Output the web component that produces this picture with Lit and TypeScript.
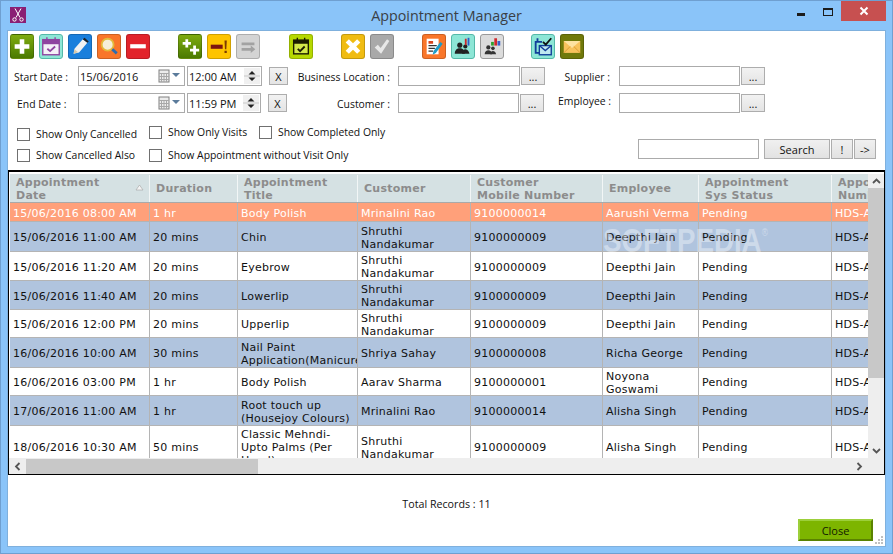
import { LitElement, css, html, svg } from 'lit'
import { customElement } from 'lit/decorators.js'

const wh = '#fff'

const icons: Record<string, unknown> = {
    add: svg`<path d="M9.500 4h5v5.500H20v5h-5.500V20h-5v-5.500H4v-5h5.500z" fill="${wh}"/>`,
    cal: svg`<rect x="3" y="4.500" width="18" height="16.500" fill="#f4f0f8" stroke="#8e44a0" stroke-width="1.500"/><rect x="3" y="4.500" width="18" height="5" fill="#8e44a0"/><path d="M7.500 2v4.500M16.500 2v4.500" stroke="#8e44a0" stroke-width="1.500"/><path d="M8 14.500l3 2.500 5.500-5" fill="none" stroke="#8e44a0" stroke-width="2"/>`,
    pencil: svg`<path d="M15 4l5 4-9 10.500-6 1.500 1-5.500z" fill="#f2f2f2"/><path d="M15 4l2-1.500 4.500 4L20 8z" fill="#222"/><path d="M5 20l1-5 4 3.200z" fill="#d8c8a8"/>`,
    glass: svg`<circle cx="10.500" cy="10" r="6.500" fill="#f6efd8" stroke="#e4b93a" stroke-width="2"/><path d="M15.500 15l5 4.500" stroke="#2c6db0" stroke-width="3"/>`,
    minus: svg`<rect x="3.500" y="9.500" width="17" height="4.500" fill="${wh}"/>`,
    addMore: svg`<path d="M7 4h3v3h3v3h-3v3H7v-3H4V7h3zM15.500 11h3v3.500H22v3h-3.500V21h-3v-3.500H12v-3h3.500z" fill="${wh}"/>`,
    warn: svg`<rect x="3" y="10" width="13" height="4.500" fill="#7c1510"/><path d="M18 5.500h2.500L20 15h-1.500zM18 16.500h2.500V19H18z" fill="#7c3b00"/>`,
    swap: svg`<path d="M5 7.500h14v3H5zM5 13.500h10V11l5 4-5 4v-2.500H5z" fill="#a2a2a2"/>`,
    calBlack: svg`<rect x="4" y="5" width="16" height="15" fill="#d4e84a" stroke="#1c1c00" stroke-width="1.500"/><rect x="4" y="5" width="16" height="4" fill="#1c1c00"/><path d="M8 2.500v4M16 2.500v4" stroke="#1c1c00" stroke-width="1.500"/><path d="M8.500 14.500l2.500 2.500 5-5" fill="none" stroke="#1c1c00" stroke-width="2"/>`,
    cross: svg`<path d="M4 7.500L7.500 4l4.500 4.500L16.500 4 20 7.500 15.500 12l4.500 4.500-3.500 3.500-4.500-4.500L7.500 20 4 16.500 8.500 12z" fill="${wh}"/>`,
    tick: svg`<path d="M4 13l3.500-3 3 3.500L17.500 4 20 6 11 20z" fill="#e8e8e8"/>`,
    form: svg`<rect x="4" y="3.500" width="13" height="17" fill="#fff"/><path d="M6 6h5v3H6z" fill="#d8431c"/><path d="M6 11h9M6 14h7M6 17h5" stroke="#333" stroke-width="1.500"/><path d="M19 7l2.500 2L14 19l-3.500 2 1-4z" fill="#1c9cc8"/>`,
    people: svg`<circle cx="8.500" cy="10.500" r="2.800" fill="#222"/><path d="M3 20c0-4 2.500-6 5.500-6s5.500 2 5.500 6z" fill="#222"/><circle cx="14.500" cy="12" r="2.300" fill="#222"/><path d="M11 20c.5-3.500 2-5 3.500-5s4 1.500 4.500 5z" fill="#222"/><path d="M14 3.500h2v7h-2z" fill="#c8282c"/><path d="M17 2.500h2V11h-2z" fill="#2c5cc8"/>`,
    peopleSmall: svg`<circle cx="8" cy="13" r="2.300" fill="#333"/><path d="M4 20.500c0-3 2-4.500 4-4.500s4 1.500 4 4.500z" fill="#333"/><circle cx="13" cy="14" r="2" fill="#333"/><path d="M10 20.500c.3-2.500 1.500-3.500 3-3.500s3 1 3.500 3.500z" fill="#333"/><path d="M11 7h3v4h-3z" fill="#2ca02c"/><path d="M14.500 3h3v8h-3z" fill="#d0282c"/><path d="M18 6h3v5h-3z" fill="#3c60c8"/>`,
    mailCal: svg`<path d="M3 6h8v2H5v10h3v2H3z" fill="#123e9a"/><rect x="8" y="11" width="13" height="10" fill="#bfe8f0" stroke="#123e9a" stroke-width="1.500"/><path d="M8 11l6.500 5.500L21 11" fill="none" stroke="#123e9a" stroke-width="1.500"/><path d="M12 7l3 3 6-7" fill="none" stroke="#111" stroke-width="2"/><path d="M6 3v4" stroke="#123e9a" stroke-width="2"/>`,
    mail: svg`<rect x="3" y="6" width="18" height="13" fill="#f7c25c"/><path d="M3 6l9 7.500L21 6z" fill="#fde2a2"/><path d="M3 19l7-7M21 19l-7-7" stroke="#d99a30"/>`,
}

const toolGroups = [
    { cls: 'g1', items: [['add', 'green'], ['cal', 'teal'], ['pencil', 'blue'], ['glass', 'orange'], ['minus', 'red']] },
    { cls: 'g2', items: [['addMore', 'green'], ['warn', 'yellow'], ['swap', 'silver']] },
    { cls: 'g3', items: [['calBlack', 'lime']] },
    { cls: 'g4', items: [['cross', 'amber'], ['tick', 'grey']] },
    { cls: 'g5', items: [['form', 'orange'], ['people', 'teal'], ['peopleSmall', 'pale']] },
    { cls: 'g6', items: [['mailCal', 'teal'], ['mail', 'olive']] },
]

const columns = [
    { label: 'Appointment\nDate', w: 140, sort: true },
    { label: 'Duration', w: 88 },
    { label: 'Appointment\nTitle', w: 120 },
    { label: 'Customer', w: 113 },
    { label: 'Customer\nMobile Number', w: 132 },
    { label: 'Employee', w: 96 },
    { label: 'Appointment\nSys Status', w: 133 },
    { label: 'Appointment\nNumber', w: 120 },
]

const SN = 'Shruthi Nandakumar'
const rows = [
    { h: 19, cls: 'hot', c: ['15/06/2016 08:00 AM', '1 hr', 'Body Polish', 'Mrinalini Rao', '9100000014', 'Aarushi Verma'] },
    { h: 30, cls: 'alt', c: ['15/06/2016 11:00 AM', '20 mins', 'Chin', SN, '9100000009', 'Deepthi Jain'] },
    { h: 29, cls: '', c: ['15/06/2016 11:20 AM', '20 mins', 'Eyebrow', SN, '9100000009', 'Deepthi Jain'] },
    { h: 29, cls: 'alt', c: ['15/06/2016 11:40 AM', '20 mins', 'Lowerlip', SN, '9100000009', 'Deepthi Jain'] },
    { h: 28, cls: '', c: ['15/06/2016 12:00 PM', '20 mins', 'Upperlip', SN, '9100000009', 'Deepthi Jain'] },
    { h: 30, cls: 'alt', c: ['16/06/2016 10:00 AM', '30 mins', 'Nail Paint Application(Manicure)', 'Shriya Sahay', '9100000008', 'Richa George'] },
    { h: 28, cls: '', c: ['16/06/2016 03:00 PM', '1 hr', 'Body Polish', 'Aarav Sharma', '9100000001', 'Noyona Goswami'] },
    { h: 30, cls: 'alt', c: ['17/06/2016 11:00 AM', '1 hr', 'Root touch up (Housejoy Colours)', 'Mrinalini Rao', '9100000014', 'Alisha Singh'] },
    { h: 42, cls: '', c: ['18/06/2016 10:30 AM', '50 mins', 'Classic Mehndi-Upto Palms (Per Hand)', SN, '9100000009', 'Alisha Singh'] },
]

@customElement('app-root')
export class AppRoot extends LitElement {

    static styles = css`
      :host {
        display: block;
        width: 893px;
        height: 554px;
        overflow: hidden;
        font-family: "Open Sans", "Noto Sans", sans-serif;
        font-size: 10.400px;
        color: #111;
      }

      .window {
        box-sizing: border-box;
        width: 893px;
        height: 554px;
        display: flex;
        flex-direction: column;
        background: #8ac4f9;
        border: 1px solid #6f9fd0;
        padding: 0 7px 7px 7px;
      }

      .titlebar {
        height: 30px;
        flex: none;
        margin: 0 -7px;
        padding: 0 6px 0 9px;
        display: grid;
        grid-template-columns: 1fr auto 1fr;
        align-items: start;
        box-sizing: border-box;
      }

      .app-icon {
        display: block;
        margin-top: 6px;
        width: 16px;
        height: 16px;
      }

      .title {
        padding: 5px 3px 0 0;
        font-size: 14.300px;
        line-height: 20px;
        color: #3a3f46;
      }

      .win-btns {
        display: flex;
        justify-content: flex-end;
        align-items: flex-start;
      }

      .win-min {
        width: 8px;
        height: 3px;
        background: #1c1c1c;
        margin: 12px 18px 0 0;
      }

      .win-max {
        width: 8px;
        height: 5px;
        border: 1px solid #1c1c1c;
        border-top-width: 2px;
        margin: 7px 8px 0 0;
      }

      .win-close {
        width: 45px;
        height: 20px;
        background: #c75050;
        display: flex;
        align-items: center;
        justify-content: center;
      }

      .client {
        flex: 1;
        min-height: 0;
        background: #fff;
        box-shadow: 0 0 0 1px #7fb0dd;
        display: flex;
        flex-direction: column;
        position: relative;
      }

      .toolbar {
        display: flex;
        margin: 3px 0 0 2px;
        height: 25px;
      }

      .group {
        display: flex;
        gap: 5px;
      }

      .g2 { margin-left: 28px; }
      .g3 { margin-left: 29px; }
      .g4 { margin-left: 28px; }
      .g5 { margin-left: 28px; }
      .g6 { margin-left: 27px; }

      .tool {
        box-sizing: border-box;
        width: 24px;
        height: 25px;
        border-radius: 3px;
        border: 1px solid rgba(0, 0, 0, .18);
        display: block;
      }

      .tool svg {
        display: block;
        width: 22px;
        height: 23px;
      }

      .green { background: linear-gradient(#7eab10, #4b7a00); }
      .teal { background: #8de6d6; border-color: #55b8a8; }
      .blue { background: #1a7fdc; }
      .orange { background: #f9762a; }
      .red { background: #e2232b; }
      .yellow { background: #fec400; }
      .silver { background: #d4d4d4; }
      .lime { background: #b6d800; }
      .amber { background: #f0bc12; }
      .grey { background: #a9a9a9; }
      .pale { background: #dcdcdc; border-color: #999; }
      .olive { background: #70790a; }

      .filters {
        margin-top: 7px;
        display: flex;
        flex-direction: column;
      }

      .frow {
        display: flex;
        align-items: center;
        height: 20px;
      }

      .frow + .frow { margin-top: 7px; }

      .label {
        flex: none;
        box-sizing: border-box;
        white-space: nowrap;
        padding-top: 2px;
      }

      .r { text-align: right; }

      .l-start { width: 70px; padding-left: 6px; }
      .l-end { width: 70px; padding-left: 9px; }
      .l-business { width: 102px; }
      .l-customer { width: 103px; }
      .l-supplier { width: 65px; }
      .l-employee { width: 67px; margin-bottom: 6px; }

      .input {
        box-sizing: border-box;
        height: 20px;
        border: 1px solid #ababab;
        background: #fff;
        flex: none;
        display: flex;
        align-items: center;
        font-size: 11px;
        padding-left: 1px;
      }

      .date { width: 107px; margin-right: 2px; }
      .time { margin-right: 7px; }
      .time-a { width: 75px; }
      .time-b { width: 74px; }

      .f-122 { width: 122px; margin-left: 8px; }
      .f-121 { width: 121px; margin-left: 8px; }
      .f-121b { width: 121px; margin-left: 9px; }

      .cal-glyph {
        flex: none;
        margin-left: auto;
        margin-right: 3px;
      }

      .spin {
        flex: none;
        margin-left: auto;
        margin-right: 1px;
        width: 16px;
        height: 16px;
        background: #f0f0f0;
      }

      .btn {
        box-sizing: border-box;
        flex: none;
        height: 18px;
        border: 1px solid #adadad;
        background: linear-gradient(#f2f2f2, #e4e4e4);
        display: flex;
        align-items: center;
        justify-content: center;
        font-size: 11px;
      }

      .x { width: 19px; }
      .dots { width: 24px; margin-left: 1px; }

      .lower {
        display: flex;
        align-items: flex-end;
        height: 47px;
        margin-top: 4px;
        justify-content: space-between;
      }

      .checks { display: flex; flex-direction: column; }

      .crow { display: flex; align-items: flex-start; padding-left: 9px; }
      .crow + .crow { margin-top: 3px; }

      .cb {
        display: flex;
        align-items: center;
        gap: 6px;
        height: 18px;
        white-space: nowrap;
      }

      .c1 { width: 132px; }
      .c2 { width: 110px; }
      .up { margin-top: -2px; }

      .box {
        box-sizing: border-box;
        width: 13px;
        height: 13px;
        border: 1px solid #707070;
        background: #fff;
      }

      .search {
        display: flex;
        padding-right: 9px;
        margin-bottom: 5px;
      }

      .search .input { width: 121px; margin-right: 5px; }
      .search .btn { height: 20px; background: linear-gradient(#f0f0f0, #e2e2e2); }

      .s1 { width: 66px; }
      .s2 { width: 22px; margin-left: 1px; }
      .s3 { width: 22px; margin-left: 1px; }

      .grid {
        box-sizing: border-box;
        margin-top: 6px;
        height: 305px;
        flex: none;
        border: 1px solid #000;
        border-top-width: 2px;
        display: flex;
        flex-direction: column;
        background: #fff;
        position: relative;
      }

      .grid-body {
        flex: 1;
        min-height: 0;
        display: flex;
        padding-top: 2px;
      }

      .table {
        margin-left: 1px;
        flex: 1;
        min-width: 0;
        overflow: hidden;
        font-family: "DejaVu Sans", Verdana, sans-serif;
        font-size: 11px;
        line-height: 13px;
        letter-spacing: .25px;
      }

      .head, .row { display: flex; width: 980px; }

      .head {
        box-sizing: border-box;
        height: 29px;
        padding-top: 1px;
        background: #d5e1e3;
        border-bottom: 1px solid #a9a9a9;
        font-weight: 700;
        color: #8c8c8c;
      }

      .hc {
        box-sizing: border-box;
        padding: 0 0 0 6px;
        display: flex;
        align-items: center;
        position: relative;
        border-right: 1px solid #f2f6f6;
        flex: none;
        white-space: pre-line;
      }

      .sort {
        position: absolute;
        right: 5px;
        top: 9px;
      }

      .row {
        box-sizing: border-box;
        border-bottom: 1px solid #b4b4b4;
        background: #fff;
        color: #111;
      }

      .row.alt { background: #b0c4de; }
      .row.hot { background: #ffa07a; color: #fff; }

      .td {
        box-sizing: border-box;
        flex: none;
        display: flex;
        align-items: center;
        padding: 2px 0 0 3px;
        border-right: 1px solid #b4b4b4;
        overflow: hidden;
      }

      .vscroll {
        width: 16px;
        flex: none;
        background: #eee;
        display: flex;
        flex-direction: column;
        align-items: center;
      }

      .vthumb {
        width: 16px;
        height: 190px;
        background: #c8c8c8;
      }

      .varrow {
        height: 14px;
        flex: none;
        display: flex;
        align-items: center;
      }

      .vfill { flex: 1; }

      .hscroll {
        height: 16px;
        flex: none;
        background: #eee;
        display: flex;
        align-items: center;
      }

      .hthumb {
        width: 232px;
        height: 15px;
        margin-left: 5px;
        background: #c8c8c8;
      }

      .harrow {
        margin-left: 5px;
        width: 7px;
        display: flex;
      }

      .hfill { flex: 1; }

      .harrow.end { margin: 0 21px 0 0; }

      .watermark {
        position: absolute;
        left: 594px;
        top: 54px;
        font-family: "Liberation Sans", sans-serif;
        font-weight: 700;
        font-size: 33px;
        line-height: 30px;
        transform: scaleX(.84);
        transform-origin: left top;
        color: rgba(255, 255, 255, .38);
        pointer-events: none;
      }

      .watermark sup {
        font-size: 10px;
        font-weight: 400;
        vertical-align: 16px;
        line-height: 0;
      }

      .footer {
        flex: 1;
        display: flex;
        flex-direction: column;
        align-items: center;
        min-height: 0;
        position: relative;
      }

      .total {
        margin-top: 21px;
        font-size: 10.700px;
        line-height: 16px;
      }

      .actions {
        align-self: flex-end;
        margin: 7px 12px 0 0;
      }

      .close {
        box-sizing: border-box;
        width: 75px;
        height: 22px;
        background: #7db500;
        border: 2px solid;
        border-color: #9ccf3a #5a8200 #5a8200 #9ccf3a;
        display: flex;
        align-items: center;
        justify-content: center;
        font-size: 11px;
        color: #111a00;
      }

      .grip {
        position: absolute;
        right: 2px;
        bottom: 2px;
      }
    `

    private tool (name: string, tone: string) {
        return html`<span class="tool ${tone}"><svg viewBox="0 0 24 24">${icons[name]}</svg></span>`
    }

    private dateField (value: string) {
        return html`
            <div class="input date">
                ${value}
                <svg class="cal-glyph" width="23" height="14" viewBox="0 0 23 14">
                    <rect x="1" y="1" width="10" height="12" fill="#ececec" stroke="#808080"/>
                    <path d="M1 4.500h10M3.500 4v9M6 4v9M8.500 4v9M1 7.500h10M1 10.500h10" stroke="#a8a8a8"/>
                    <path d="M14 4h8l-4 4z" fill="#5b7b9b"/>
                </svg>
            </div>
        `
    }

    private timeField (value: string, cls: string) {
        return html`
            <div class="input time ${cls}">
                ${value}
                <svg class="spin" viewBox="0 0 16 16">
                    <path d="M0 8h16" stroke="#c8c8c8"/>
                    <path d="M8 3l3.500 3.500h-7zM8 13l-3.500-3.500h7z" fill="#222"/>
                </svg>
            </div>
        `
    }

    private check (text: string, cls = '') {
        return html`<div class="cb ${cls}"><span class="box"></span>${text}</div>`
    }

    render () {
        return html`
            <div class="window">
                <div class="titlebar">
                    <svg class="app-icon" viewBox="0 0 16 16">
                        <rect width="16" height="16" fill="#8a1f74"/>
                        <path d="M5 1.500l5 9M11 1.500l-5 9" stroke="#fff"/>
                        <circle cx="4.500" cy="12.500" r="1.700" fill="none" stroke="#fff"/>
                        <circle cx="11.500" cy="12.500" r="1.700" fill="none" stroke="#fff"/>
                    </svg>
                    <span class="title">Appointment Manager</span>
                    <div class="win-btns">
                        <span class="win-min"></span>
                        <span class="win-max"></span>
                        <span class="win-close">
                            <svg width="10" height="10" viewBox="0 0 10 10">
                                <path d="M1.500 1.500l7 7M8.500 1.500l-7 7" stroke="#fff" stroke-width="2"/>
                            </svg>
                        </span>
                    </div>
                </div>
                <div class="client">
                    <div class="toolbar">
                        ${toolGroups.map(g => html`
                            <div class="group ${g.cls}">${g.items.map(i => this.tool(i[0], i[1]))}</div>
                        `)}
                    </div>
                    <div class="filters">
                        <div class="frow">
                            <span class="label l-start">Start Date :</span>
                            ${this.dateField('15/06/2016')}
                            ${this.timeField('12:00 AM', 'time-a')}
                            <span class="btn x">X</span>
                            <span class="label r l-business">Business Location :</span>
                            <div class="input f-122"></div>
                            <span class="btn dots">...</span>
                            <span class="label r l-supplier">Supplier :</span>
                            <div class="input f-121b"></div>
                            <span class="btn dots">...</span>
                        </div>
                        <div class="frow">
                            <span class="label l-end">End Date :</span>
                            ${this.dateField('')}
                            ${this.timeField('11:59 PM', 'time-b')}
                            <span class="btn x">X</span>
                            <span class="label r l-customer">Customer :</span>
                            <div class="input f-121"></div>
                            <span class="btn dots">...</span>
                            <span class="label r l-employee">Employee :</span>
                            <div class="input f-121"></div>
                            <span class="btn dots">...</span>
                        </div>
                    </div>
                    <div class="lower">
                        <div class="checks">
                            <div class="crow">
                                ${this.check('Show Only Cancelled', 'c1')}
                                <div class="up c2">${this.check('Show Only Visits')}</div>
                                <div class="up">${this.check('Show Completed Only')}</div>
                            </div>
                            <div class="crow">
                                ${this.check('Show Cancelled Also', 'c1')}
                                ${this.check('Show Appointment without Visit Only')}
                            </div>
                        </div>
                        <div class="search">
                            <div class="input"></div>
                            <span class="btn s1">Search</span>
                            <span class="btn s2">!</span>
                            <span class="btn s3">-&gt;</span>
                        </div>
                    </div>
                    <div class="grid">
                        <div class="grid-body">
                            <div class="table">
                                <div class="head">
                                    ${columns.map(c => html`
                                        <div class="hc" style="width:${c.w}px">
                                            <span>${c.label}</span>
                                            ${c.sort ? html`
                                                <svg class="sort" width="9" height="7" viewBox="0 0 9 7">
                                                    <path d="M4.500 1L8 6H1z" fill="#f4f4f4" stroke="#aaa" stroke-width=".7"/>
                                                </svg>` : ''}
                                        </div>
                                    `)}
                                </div>
                                ${rows.map(r => html`
                                    <div class="row ${r.cls}" style="height:${r.h}px">
                                        ${r.c.map((t, i) => html`<div class="td" style="width:${columns[i].w}px">${t}</div>`)}
                                        <div class="td" style="width:${columns[6].w}px">Pending</div>
                                        <div class="td" style="width:${columns[7].w}px">HDS-A</div>
                                    </div>
                                `)}
                            </div>
                            <div class="vscroll">
                                <div class="varrow">
                                    <svg width="9" height="6" viewBox="0 0 9 6"><path d="M1 5l3.500-3.500L8 5" fill="none" stroke="#555" stroke-width="1.800"/></svg>
                                </div>
                                <div class="vthumb"></div>
                                <div class="vfill"></div>
                                <div class="varrow">
                                    <svg width="9" height="6" viewBox="0 0 9 6"><path d="M1 1l3.500 3.500L8 1" fill="none" stroke="#555" stroke-width="1.800"/></svg>
                                </div>
                            </div>
                        </div>
                        <div class="hscroll">
                            <div class="harrow">
                                <svg width="7" height="9" viewBox="0 0 7 9"><path d="M5.500 1L2 4.500 5.500 8" fill="none" stroke="#555" stroke-width="1.800"/></svg>
                            </div>
                            <div class="hthumb"></div>
                            <div class="hfill"></div>
                            <div class="harrow end">
                                <svg width="7" height="9" viewBox="0 0 7 9"><path d="M1.500 1L5 4.500 1.500 8" fill="none" stroke="#555" stroke-width="1.800"/></svg>
                            </div>
                        </div>
                        <div class="watermark">SOFTPEDIA<sup>®</sup></div>
                    </div>
                    <div class="footer">
                        <div class="total">Total Records : 11</div>
                        <div class="actions"><div class="close">Close</div></div>
                        <svg class="grip" width="9" height="9" viewBox="0 0 9 9">
                            <path d="M7 1h2v2H7zM4 4h2v2H4zM7 4h2v2H7zM1 7h2v2H1zM4 7h2v2H4zM7 7h2v2H7z" fill="#c0c0c0"/>
                        </svg>
                    </div>
                </div>
            </div>
        `
    }
}
